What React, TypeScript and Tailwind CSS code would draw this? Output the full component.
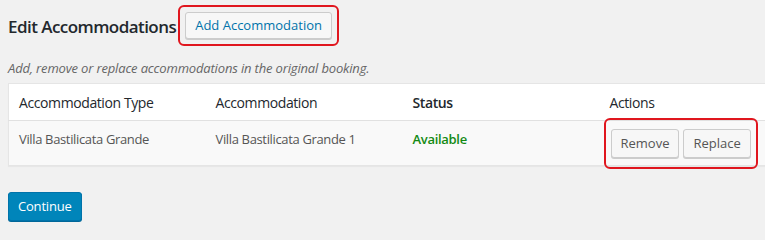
import React from "react";

export default function App() {
  return (
    <div className="w-[765px] h-[240px] bg-[#f1f1f1] overflow-hidden text-[#23282d]" style={{ fontFamily: '"Open Sans", "Noto Sans", sans-serif' }}>
      <div className="pl-2">
        <div className="flex items-center h-[53px] -mt-[1px]">
          <h1 className="text-[17px] font-semibold leading-none tracking-[-0.55px] mt-[2px]">Edit Accommodations</h1>
          <div className="ml-[2px] rounded-[6px] border-2 border-[#e0161e] px-[5px] py-[5px]">
            <button className="h-[27px] px-[9px] text-[13px] leading-none text-[#0073aa] bg-[#f7f7f7] border border-[#cccccc] rounded-[3px] shadow-[0_1px_0_#cccccc]">
              Add Accommodation
            </button>
          </div>
        </div>
        <p className="text-[13px] italic text-[#666666] leading-none mt-[10px] tracking-[-0.16px]">Add, remove or replace accommodations in the original booking.</p>
        <table className="mt-[8px] w-[757px] border-collapse table-fixed text-left border border-r-0 border-[#e5e5e5] shadow-[0_1px_1px_rgba(0,0,0,0.04)]">
          <colgroup>
            <col className="w-[197px]" />
            <col className="w-[197px]" />
            <col className="w-[197px]" />
            <col />
          </colgroup>
          <thead>
            <tr className="bg-white h-[37px] border-b border-[#e1e1e1]">
              <th className="px-[10px] text-[14px] font-normal tracking-[-0.4px]">Accommodation Type</th>
              <th className="px-[10px] text-[14px] font-normal tracking-[-0.4px]">Accommodation</th>
              <th className="px-[10px] text-[14px] font-semibold tracking-[-0.4px]">Status</th>
              <th className="px-[10px] text-[14px] font-normal tracking-[-0.4px]">Actions</th>
            </tr>
          </thead>
          <tbody>
            <tr className="bg-[#f9f9f9] h-[45px]">
              <td className="px-[10px] text-[13px] text-[#555555] align-top pt-[9px] tracking-[-0.35px]">Villa Bastilicata Grande</td>
              <td className="px-[10px] text-[13px] text-[#555555] align-top pt-[9px] tracking-[-0.35px]">Villa Bastilicata Grande 1</td>
              <td className="px-[10px] text-[13px] font-semibold text-[#138a13] align-top pt-[9px] tracking-[-0.3px]">Available</td>
              <td className="pl-[4px] align-top">
                <div className="mt-[-3px] mb-[-6px] inline-flex gap-[4px] rounded-[6px] border-2 border-[#e0161e] px-[5px] py-[9px]">
                  <button className="h-[29px] px-[9px] text-[13px] leading-none text-[#555555] bg-[#f7f7f7] border border-[#cccccc] rounded-[3px] shadow-[0_1px_0_#cccccc]">Remove</button>
                  <button className="h-[29px] px-[9px] text-[13px] leading-none text-[#555555] bg-[#f7f7f7] border border-[#cccccc] rounded-[3px] shadow-[0_1px_0_#cccccc]">Replace</button>
                </div>
              </td>
            </tr>
          </tbody>
        </table>
        <button className="mt-[26px] h-[29px] px-[9px] text-[13px] leading-none text-white bg-[#0085ba] border border-[#0073aa] rounded-[3px] shadow-[0_1px_0_#006799] tracking-[-0.2px]">
          Continue
        </button>
      </div>
    </div>
  );
}
